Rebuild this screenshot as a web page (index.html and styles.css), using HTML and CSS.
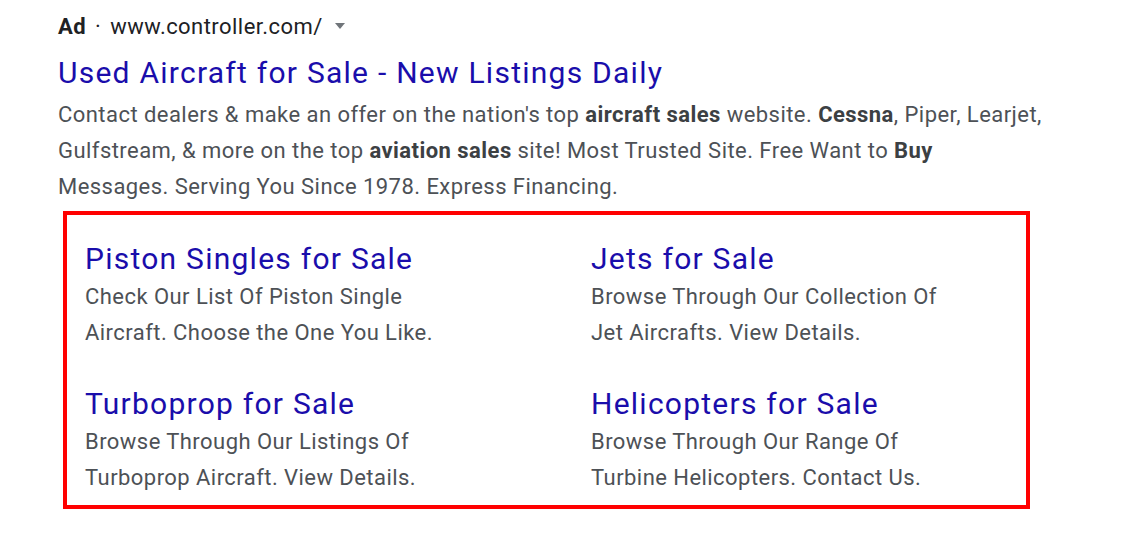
FILE: index.html
```html
<!DOCTYPE html>
<html lang="en">
<head>
<meta charset="UTF-8" />
<meta name="viewport" content="width=device-width, initial-scale=1" />
<title>Used Aircraft for Sale - Ad</title>
<link rel="stylesheet" href="styles.css">
</head>
<body>

<div class="ad">
  <div class="ad-head">
    <span class="ad-label">Ad</span>
    <span class="ad-dot">·</span>
    <span class="ad-url">www.controller.com/</span>
    <span class="ad-caret"></span>
  </div>

  <a class="ad-title" href="#">Used Aircraft for Sale - New Listings Daily</a>

  <p class="ad-desc">
    Contact dealers &amp; make an offer on the nation's top <b>aircraft sales</b> website. <b>Cessna</b>, Piper, Learjet,<br>
    Gulfstream, &amp; more on the top <b>aviation sales</b> site! Most Trusted Site. Free Want to <b>Buy</b><br>
    Messages. Serving You Since 1978. Express Financing.
  </p>

  <div class="sitelinks">
    <div class="sitelink">
      <a href="#">Piston Singles for Sale</a>
      <p>Check Our List Of Piston Single<br>Aircraft. Choose the One You Like.</p>
    </div>
    <div class="sitelink">
      <a href="#">Jets for Sale</a>
      <p>Browse Through Our Collection Of<br>Jet Aircrafts. View Details.</p>
    </div>
    <div class="sitelink">
      <a href="#">Turboprop for Sale</a>
      <p>Browse Through Our Listings Of<br>Turboprop Aircraft. View Details.</p>
    </div>
    <div class="sitelink">
      <a href="#">Helicopters for Sale</a>
      <p>Browse Through Our Range Of<br>Turbine Helicopters. Contact Us.</p>
    </div>
  </div>
</div>

</body>
</html>
```

FILE: styles.css
```css
body {
  margin: 0;
  padding: 12px 0 0 58px;
  background: #fff;
  font-family: Roboto, Arial, sans-serif;
  color: #4d5156;
}
a {
  text-decoration: none;
  color: #1a0dab;
}
.ad-head {
  display: flex;
  align-items: center;
  height: 28px;
  font-size: 22px;
  letter-spacing: 0.45px;
  color: #202124;
}
.ad-label {
  font-weight: bold;
}
.ad-dot {
  margin: 0 9px;
}
.ad-caret {
  width: 0;
  height: 0;
  margin-left: 12px;
  border-left: 5.5px solid transparent;
  border-right: 5.5px solid transparent;
  border-top: 6px solid #70757a;
}
.ad-title {
  display: block;
  margin-top: 15px;
  font-size: 30px;
  line-height: 36px;
  letter-spacing: 1.25px;
}
.ad-desc {
  margin: 6px 0 0;
  font-size: 22px;
  line-height: 36px;
  letter-spacing: 0.45px;
  white-space: nowrap;
}
.ad-desc b {
  color: #3c4043;
}
.sitelinks {
  display: grid;
  grid-template-columns: 506px auto;
  row-gap: 35px;
  width: 967px;
  margin: 6px 0 0 5px;
  padding: 26px 0 9px 18px;
  border: 4px solid #ff0000;
  box-sizing: border-box;
}
.sitelink a {
  display: block;
  font-size: 30px;
  line-height: 36px;
  letter-spacing: 1.25px;
}
.sitelink p {
  margin: 2px 0 0;
  font-size: 22px;
  line-height: 36px;
  letter-spacing: 0.45px;
  white-space: nowrap;
}
```
